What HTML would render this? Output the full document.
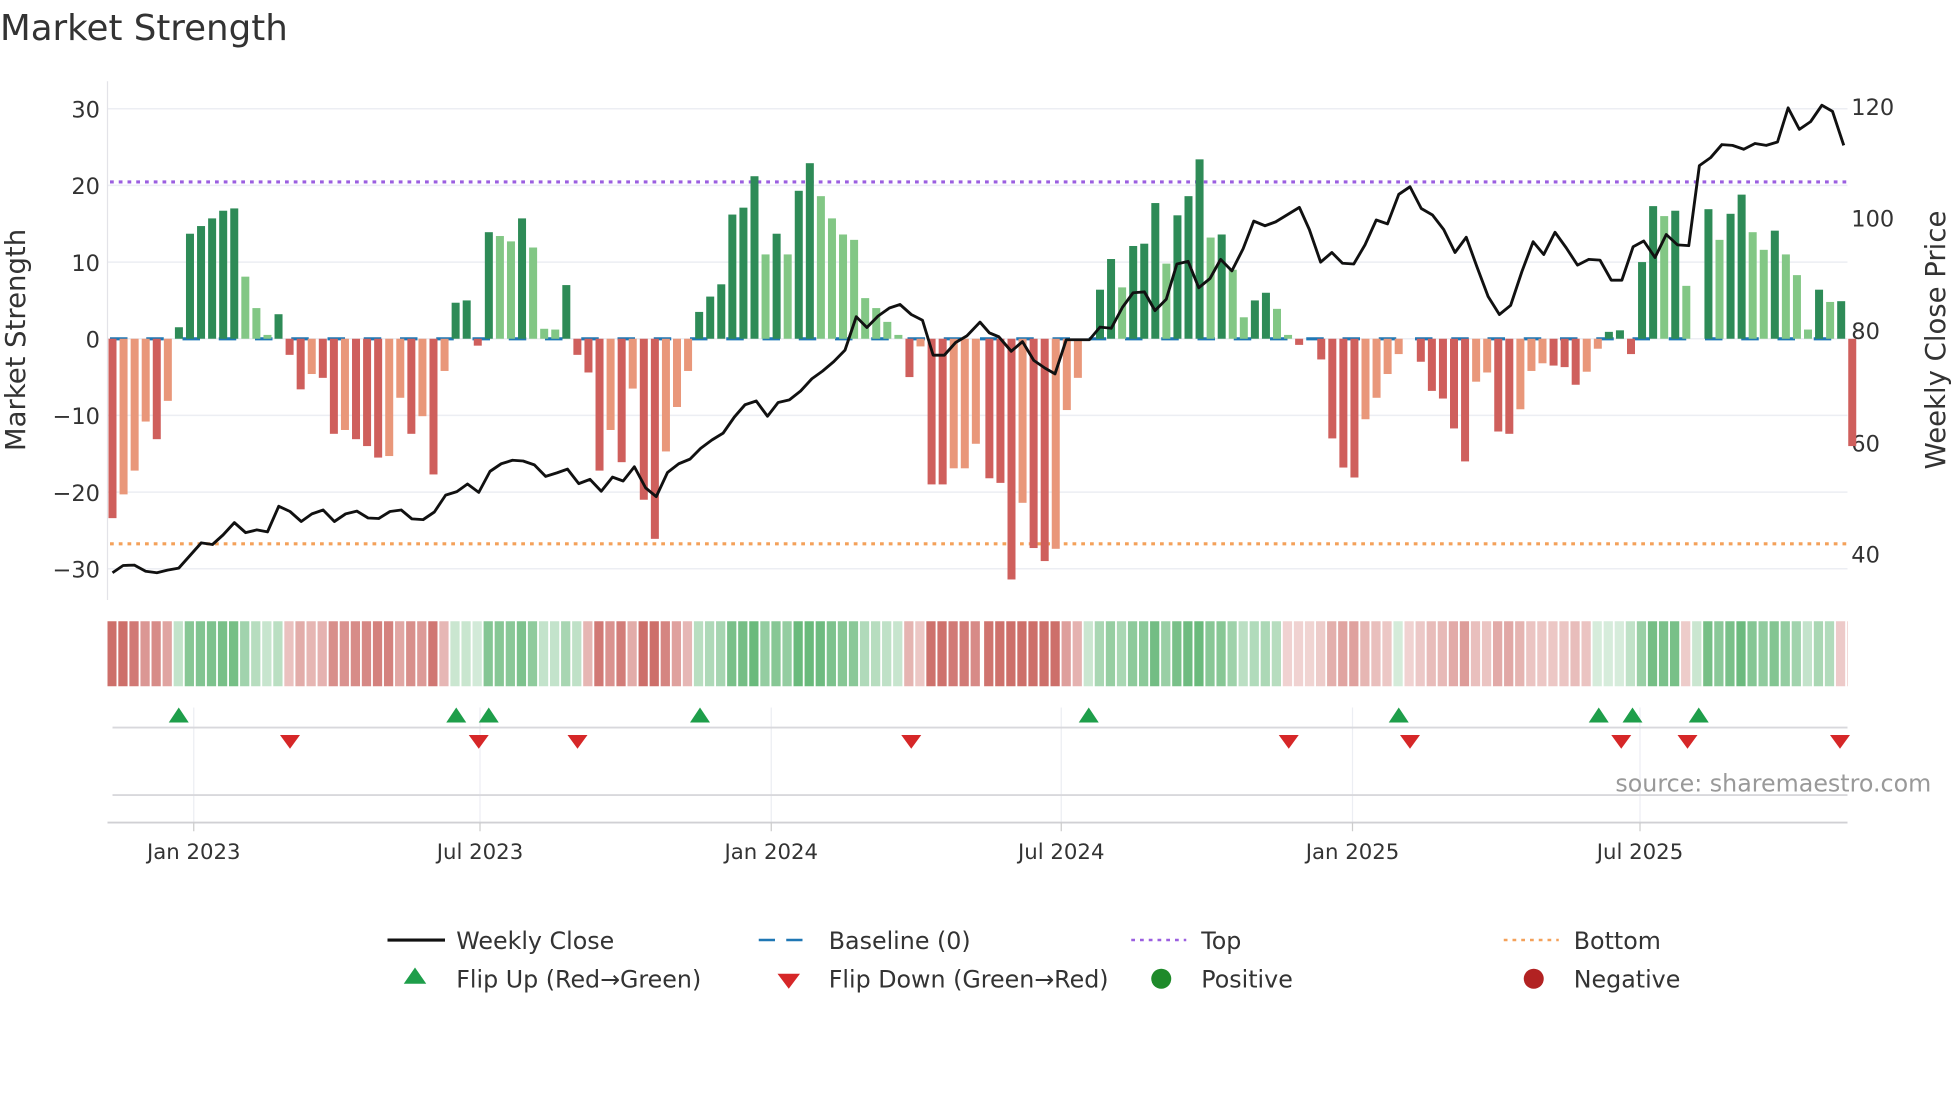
<!DOCTYPE html>
<html><head><meta charset="utf-8"><style>
html,body{margin:0;padding:0;background:#fff;overflow:hidden}
#wrap{width:1568px;height:882px;transform:scale(1.25);transform-origin:0 0;position:relative;font-family:"DejaVu Sans","Liberation Sans",sans-serif;color:#333}
svg text{font-family:"DejaVu Sans","Liberation Sans",sans-serif}
</style></head><body><div id="wrap"><svg id="s" width="1568" height="882" xmlns="http://www.w3.org/2000/svg"></svg></div>
<script>
let h='';
const Y0=271,U=6.133;
h+='<text x="0" y="32" font-size="28.5" fill="#333">Market Strength</text>';
for(let v=-30;v<=30;v+=10){const y=Y0-v*U;h+=`<line x1="86" x2="1478" y1="${y}" y2="${y}" stroke="#eceef3" stroke-width="1.2"/>`;
h+=`<text x="80" y="${y+7}" font-size="18" text-anchor="end" fill="#333">${v<0?'\u2212'+(-v):v}</text>`;}
h+='<line x1="86" x2="86" y1="65" y2="480" stroke="#e3e3e8"/>';
[[120,85],[100,174],[80,264],[60,354],[40,443]].forEach(a=>h+=`<text x="1481" y="${a[1]+7}" font-size="18" fill="#333">${a[0]}</text>`);
h+='<text transform="translate(20,272) rotate(-90)" font-size="22" text-anchor="middle" fill="#333">Market Strength</text>';
h+='<text transform="translate(1556,272) rotate(-90)" font-size="22" text-anchor="middle" fill="#333">Weekly Close Price</text>';
h+=`<line x1="88" x2="1478" y1="${Y0}" y2="${Y0}" stroke="#1f77b4" stroke-width="2.5" stroke-dasharray="14,15"/>`;
h+='<line x1="88" x2="1478" y1="145.5" y2="145.5" stroke="#9b5fe0" stroke-width="2.5" stroke-dasharray="3,4"/>';
h+='<line x1="88" x2="1478" y1="435" y2="435" stroke="#f4a15a" stroke-width="2.5" stroke-dasharray="3,4"/>';
const b1=[[-23.4,1],[-20.3,0],[-17.2,0],[-10.8,0],[-13.1,1],[-8.1,0],[1.5,1],[13.7,1],[14.7,1],[15.7,1],[16.7,1],[17,1],[8.1,0],[4,0],[0.5,0],[3.2,1],[-2.1,1],[-6.6,1],[-4.6,0],[-5.1,1],[-12.4,1],[-11.9,0],[-13.1,1],[-14,1],[-15.5,1],[-15.3,0],[-7.7,0],[-12.4,1],[-10.1,0],[-17.7,1],[-4.2,0],[4.7,1],[5,1],[-0.9,1],[13.9,1],[13.4,0],[12.7,0],[15.7,1],[11.9,0],[1.3,0],[1.2,0],[7,1],[-2.1,1],[-4.4,1],[-17.2,1],[-11.9,0],[-16.1,1],[-6.5,0],[-21,1],[-26.1,1],[-14.7,0],[-8.9,0],[-4.2,0],[3.5,1],[5.5,1],[7.1,1],[16.2,1],[17.1,1],[21.2,1],[11,0],[13.7,1],[11,0],[19.3,1],[22.9,1],[18.6,0],[15.7,0],[13.6,0],[12.9,0],[5.3,0],[4,0],[2.2,0],[0.5,0],[-5,1],[-1,0],[-19,1],[-19,1],[-16.9,0],[-16.9,0],[-13.7,0]];
const b2=[[-18.2,1],[-18.8,1],[-31.4,1],[-21.4,0],[-27.3,1],[-29,1],[-27.4,0],[-9.3,0],[-5.1,0],[0,0],[6.4,1],[10.4,1],[6.7,0],[12.1,1],[12.4,1],[17.7,1],[9.8,0],[16.1,1],[18.6,1],[23.4,1],[13.2,0],[13.6,1],[9,0],[2.8,0],[5,1],[6,1],[3.9,0],[0.5,0],[-0.8,1],[0,0],[-2.7,1],[-13,1],[-16.8,1],[-18.1,1],[-10.5,0],[-7.7,0],[-4.6,0],[-2,0],[0,0],[-3,1],[-6.8,1],[-7.8,1],[-11.7,1],[-16,1],[-5.6,0],[-4.4,0],[-12.1,1],[-12.4,1],[-9.2,0],[-4.2,0],[-3.2,0],[-3.5,1],[-3.7,1],[-6,1],[-4.3,0],[-1.3,0],[0.9,1],[1.1,1],[-2,1],[10,1],[17.3,1],[16,0],[16.7,1],[6.9,0],[0,0],[16.9,1],[12.9,0],[16.3,1],[18.8,1],[13.9,0],[11.6,0],[14.1,1],[11,0],[8.3,0],[1.2,0],[6.4,1],[4.8,0],[4.9,1],[-14,1]];
const bars=[];
b1.forEach((b,i)=>bars.push([90+i*8.855,b[0],b[1]]));
b2.forEach((b,i)=>bars.push([791.5+i*8.85,b[0],b[1]]));
bars.forEach(b=>{const [x,v,d]=b;if(Math.abs(v)<0.05)return;const c=v>0?(d?'#2e8b57':'#82c785'):(d?'#cf5f5c':'#e9977a');
const y=v>0?Y0-v*U:Y0;h+=`<rect x="${x-3.2}" y="${y}" width="6.4" height="${Math.abs(v)*U}" fill="${c}"/>`;});
const p1=[[180,1497],[197,1478],[215,1477],[233,1493],[251,1497],[268,1490],[286,1485],[304,1452],[322,1419],[340,1423],[357,1398],[375,1366],[393,1392],[411,1385],[428,1390],[446,1323],[464,1337],[482,1363],[499,1343],[517,1333],[535,1363],[553,1343],[571,1336],[589,1354],[606,1355],[624,1337],[642,1333],[659,1356],[677,1358],[695,1338],[713,1294],[731,1285],[748,1265],[766,1287],[784,1232],[802,1212],[820,1203],[837,1205],[855,1215],[873,1245],[891,1236],[908,1226],[926,1264],[944,1253],[962,1284],[980,1247],[997,1257],[1015,1220],[1033,1275],[1050,1298],[1068,1235],[1086,1212],[1104,1200],[1121,1172],[1139,1150],[1157,1132],[1175,1090],[1192,1058],[1210,1048],[1228,1088],[1245,1052],[1263,1045],[1281,1022],[1299,990],[1316,970],[1334,945],[1352,915],[1370,828],[1387,856],[1405,826],[1423,805],[1440,796],[1458,822],[1476,837],[1493,928],[1511,928],[1529,895],[1547,878]];
const p2=[[0,842],[15,870],[30,880],[50,918],[68,893],[86,942],[104,962],[120,977],[138,888],[155,888],[175,888],[192,855],[210,858],[228,803],[245,765],[263,763],[280,812],[298,782],[315,690],[333,683],[350,752],[368,728],[385,678],[403,708],[421,650],[438,578],[456,590],[473,580],[491,562],[511,542],[527,600],[545,685],[563,660],[580,688],[598,690],[616,640],[634,575],[652,585],[670,508],[688,488],[706,545],[724,562],[742,600],[760,660],[778,620],[795,697],[813,775],[831,822],[849,798],[867,710],[885,632],[902,665],[920,607],[938,648],[956,693],[974,678],[992,680],[1010,732],[1027,732],[1045,645],[1062,630],[1080,673],[1098,613],[1116,640],[1134,642],[1151,433],[1169,412],[1187,378],[1204,380],[1222,390],[1240,375],[1258,380],[1276,371],[1293,282],[1311,338],[1329,318],[1347,275],[1364,291],[1382,380]];
const pts=p1.map(p=>[p[0]/2,p[1]/3.267]).concat(p2.map(p=>[p[0]/2+784,p[1]/3.267]));
h+=`<polyline points="${pts.map(p=>p[0].toFixed(1)+','+p[1].toFixed(1)).join(' ')}" fill="none" stroke="#111" stroke-width="2.3" stroke-linejoin="round"/>`;
const segs=[[80,140,-1],[140,228,1],[228,358,-1],[358,385,0.5],[385,470,1],[470,557,-1],[557,725,1],[725,868,-1],[868,1028,1],[1028,1117,-0.6],[1117,1127,0.4],[1127,1275,-0.7],[1275,1300,0.4],[1300,1348,1],[1348,1356,-0.4],[1356,1470,1],[1470,1490,-0.5]];
bars.forEach(b=>{let x=b[0];let s=1;segs.forEach(g=>{if(x>=g[0]&&x<g[1])s=g[2];});
let m=Math.min(1,0.2+Math.abs(b[1])/24)*Math.abs(s);const a=(0.18+0.72*m).toFixed(2);
const c=s>0?`rgba(90,178,110,${a})`:`rgba(200,95,90,${a})`;
let x0=Math.max(86,x-4.2),x1=Math.min(1478,x+3.2);
h+=`<rect x="${x0}" y="497" width="${x1-x0}" height="52" fill="${c}"/>`;});
[155,384,617,849,1082,1312].forEach(x=>h+=`<line x1="${x}" x2="${x}" y1="566" y2="658" stroke="#eceef3"/>`);
h+='<line x1="90" x2="1478" y1="582" y2="582" stroke="#d8d8dc" stroke-width="1.5"/>';
h+='<line x1="90" x2="1478" y1="636" y2="636" stroke="#d8d8dc" stroke-width="1.5"/>';
h+='<line x1="86" x2="1478" y1="658" y2="658" stroke="#d0d0d4" stroke-width="1.5"/>';
[155,384,617,849,1082,1312].forEach(x=>h+=`<line x1="${x}" x2="${x}" y1="658" y2="665" stroke="#ccc"/>`);
[143,365,391,560,871,1119,1279,1306,1359].forEach(x=>h+=`<polygon points="${x-8},578 ${x+8},578 ${x},566" fill="#1e9e4a"/>`);
[232,383,462,729,1031,1128,1297,1350,1472].forEach(x=>h+=`<polygon points="${x-8},588 ${x+8},588 ${x},599" fill="#d62728"/>`);
[["Jan 2023",155],["Jul 2023",384],["Jan 2024",617],["Jul 2024",849],["Jan 2025",1082],["Jul 2025",1312]].forEach(a=>h+=`<text x="${a[1]}" y="687" font-size="17" text-anchor="middle" fill="#333">${a[0]}</text>`);
h+='<text x="1545" y="633" font-size="19" text-anchor="end" fill="#999">source: sharemaestro.com</text>';
const L=(t,x,y)=>h+=`<text x="${x}" y="${y+7}" font-size="19" fill="#333">${t}</text>`;
h+='<line x1="310" x2="356" y1="752" y2="752" stroke="#111" stroke-width="2.5"/>';L("Weekly Close",365,752);
h+='<line x1="607" x2="651" y1="752" y2="752" stroke="#1f77b4" stroke-width="2" stroke-dasharray="13,9"/>';L("Baseline (0)",663,752);
h+='<line x1="905" x2="949" y1="752" y2="752" stroke="#9b5fe0" stroke-width="2" stroke-dasharray="3,4"/>';L("Top",961,752);
h+='<line x1="1203" x2="1247" y1="752" y2="752" stroke="#f4a15a" stroke-width="2" stroke-dasharray="3,4"/>';L("Bottom",1259,752);
h+='<polygon points="323,787 341,787 332,774" fill="#1e9e4a"/>';L("Flip Up (Red\u2192Green)",365,783);
h+='<polygon points="622,779 640,779 631,791" fill="#d62728"/>';L("Flip Down (Green\u2192Red)",663,783);
h+='<circle cx="929" cy="783" r="8" fill="#1e8a2a"/>';L("Positive",961,783);
h+='<circle cx="1227" cy="783" r="8" fill="#b22222"/>';L("Negative",1259,783);
document.getElementById('s').innerHTML=h;
</script></body></html>
